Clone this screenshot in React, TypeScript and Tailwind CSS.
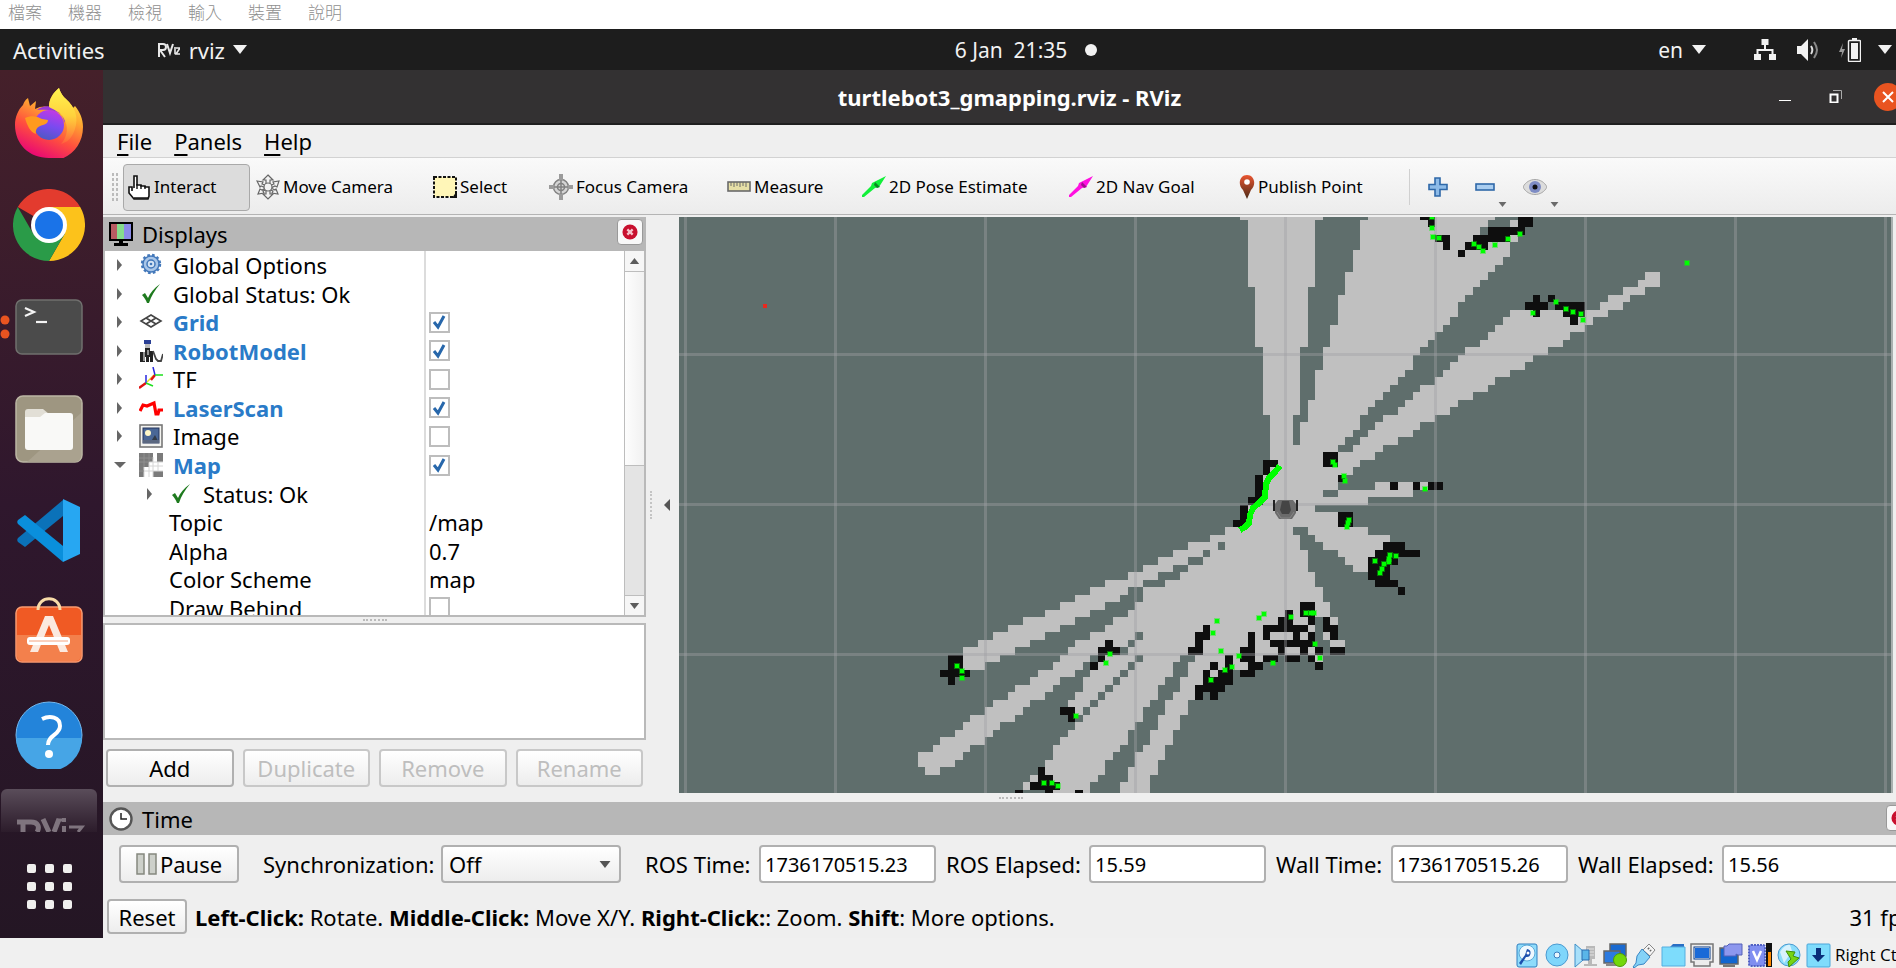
import React, { useState } from "react";

type Runs = number[];
type MapRow = [row: number, free: Runs, occupied: Runs];

/* Occupancy grid around the robot. Each run is a start/end column pair. */
const MAP_ROWS: MapRow[] = [
  [-39, [-6, 5, 11, 18, 20, 28], [18, 20, 31, 33]],
  [-38, [-5, 4, 10, 27, 30, 31], [19, 20, 31, 33]],
  [-37, [-5, 4, 10, 26], [27, 32]],
  [-36, [-5, 4, 10, 31], [20, 22, 25, 30]],
  [-35, [-5, 4, 10, 30], [21, 22, 24, 27]],
  [-34, [-5, 4, 9, 30], [23, 24]],
  [-33, [-5, 4, 9, 29], []],
  [-32, [-5, 4, 9, 28], []],
  [-31, [-5, 4, 8, 27, 48, 50], []],
  [-30, [-5, 4, 8, 26, 47, 50], []],
  [-29, [-4, 3, 8, 25, 45, 48], []],
  [-28, [-4, 3, 7, 24, 43, 46], [33, 34, 35, 36]],
  [-27, [-4, 3, 7, 23, 42, 45], [32, 35, 36, 40]],
  [-26, [-4, 3, 7, 23, 30, 37, 40, 43], [33, 34, 37, 40]],
  [-25, [-4, 3, 7, 22, 29, 41], [38, 39]],
  [-24, [-4, 3, 6, 21, 28, 40], []],
  [-23, [-4, 3, 6, 20, 27, 38], []],
  [-22, [-4, 3, 6, 19, 26, 37], []],
  [-21, [-3, 2, 5, 18, 24, 35], []],
  [-20, [-3, 2, 5, 17, 23, 33], []],
  [-19, [-3, 2, 5, 17, 22, 32], []],
  [-18, [-3, 2, 4, 16, 21, 30], []],
  [-17, [-3, 2, 4, 15, 20, 28], []],
  [-16, [-3, 2, 4, 14, 18, 27], []],
  [-15, [-3, 2, 4, 13, 17, 25], []],
  [-14, [-3, 2, 3, 12, 16, 23], []],
  [-13, [-3, 2, 3, 11, 15, 22], []],
  [-12, [-2, 1, 3, 10, 13, 20], []],
  [-11, [-2, 1, 2, 10, 12, 18], []],
  [-10, [-2, 1, 2, 9, 11, 17], []],
  [-9, [-2, 1, 2, 8, 10, 15], []],
  [-8, [-2, 7, 9, 13], []],
  [-7, [-2, 12], [5, 7]],
  [-6, [-2, 10], [-3, -1, 5, 7]],
  [-5, [-2, 9], [-3, -2]],
  [-4, [-3, 7], [-4, -3, 7, 8]],
  [-3, [-3, 7, 12, 19], [-4, -3, 14, 15, 17, 18, 19, 21]],
  [-2, [-3, 5, 7, 17], [-4, -3]],
  [-1, [-3, 11], [-5, -3]],
  [0, [-5, 4], [-6, -5]],
  [1, [-5, 7], [-6, -5, 7, 9]],
  [2, [-5, 7], [-7, -5, 7, 9]],
  [3, [-8, 1, 3, 11], []],
  [4, [-10, 2, 4, 14], []],
  [5, [-13, -9, -8, 2, 5, 13], [13, 16]],
  [6, [-15, -11, -10, 3, 7, 12], [12, 18]],
  [7, [-17, -13, -11, 3, 8, 11], [11, 15]],
  [8, [-19, -15, -13, 3, 9, 11], [11, 14]],
  [9, [-21, -17, -14, 4], [11, 14]],
  [10, [-24, -19, -16, 4], [12, 15]],
  [11, [-26, -21, -19, 5], [15, 16]],
  [12, [-28, -22, -19, 5], []],
  [13, [-30, -24, -20, 6], [2, 4]],
  [14, [-32, -26, -21, 6], [0, 1, 2, 4]],
  [15, [-35, -28, -23, 4, 6, 7], [-1, 1, 3, 4, 5, 6]],
  [16, [-37, -30, -24, 4], [-11, -10, -3, 3, 5, 7]],
  [17, [-39, -32, -26, -20, -19, 3, 5, 6], [-12, -10, -5, -4, -3, -2, 1, 2, 3, 4, 6, 7]],
  [18, [-41, -34, -28, -21, -20, -2, 6, 8], [-24, -23, -12, -11, -5, -4, -2, 4]],
  [19, [-43, -36, -29, -25, -21, 4], [-25, -22, -13, -11, -6, -4, -1, 0, 2, 3, 4, 5, 6, 8]],
  [20, [-43, -38, -30, -26, -24, -20, -19, -14, -12, -3, 4, 5], [-45, -43, -25, -24, -8, -7, -6, -4, -3, -1, 0, 2, 3, 4]],
  [21, [-43, -40, -31, -27, -25, -21, -20, -15, -13, -5], [-45, -43, -26, -25, -10, -9, -8, -7, -5, -3, 4, 5]],
  [22, [-33, -28, -26, -22, -21, -15, -13, -9], [-46, -42, -11, -10, -9, -7, -6, -4]],
  [23, [-34, -30, -27, -23, -22, -16, -14, -11], [-45, -44, -11, -7]],
  [24, [-36, -31, -27, -24, -23, -17, -14, -12], [-12, -8]],
  [25, [-37, -32, -28, -25, -24, -17, -15, -12], [-12, -11, -10, -9]],
  [26, [-39, -34, -29, -26, -25, -18, -16, -13], []],
  [27, [-40, -35, -28, -27, -26, -19, -16, -13], [-30, -28]],
  [28, [-42, -36, -27, -19, -17, -14], [-29, -28]],
  [29, [-43, -38, -28, -20, -17, -14], []],
  [30, [-44, -39, -29, -21, -18, -15], []],
  [31, [-46, -40, -30, -21, -18, -15], []],
  [32, [-47, -42, -31, -22, -19, -16], []],
  [33, [-49, -43, -31, -23, -20, -16], []],
  [34, [-49, -44, -32, -24, -20, -17], []],
  [35, [-48, -46, -32, -24, -21, -17], [-33, -32]],
  [36, [-34, -33, -31, -25, -21, -18], [-33, -31]],
  [37, [-35, -34, -30, -26, -22, -18], [-34, -30]],
  [38, [-31, -26, -22, -18], [-36, -35, -32, -31, -28, -27]],
];

const SCAN_POINTS: [number, number][] = [
  [1217, 621], [1213, 633], [1221, 651], [1259, 618], [1264, 614], [1291, 617], [1306, 613],
  [1311, 613], [1314, 613], [1315, 644], [1320, 658], [1273, 663], [1239, 656], [1232, 667],
  [1225, 670], [1211, 680], [1110, 654], [1106, 663], [1076, 716], [1044, 783], [1052, 783],
  [1058, 786], [957, 666], [962, 671], [962, 678], [1425, 489], [1375, 561], [1396, 556],
  [1390, 555], [1389, 559], [1389, 562], [1384, 564], [1382, 569], [1380, 573], [1349, 520],
  [1348, 523], [1347, 527], [1344, 476], [1345, 481], [1333, 462], [1335, 465], [1432, 217],
  [1432, 228], [1433, 237], [1439, 238], [1474, 244], [1479, 247], [1483, 251], [1495, 245],
  [1508, 239], [1520, 234], [1556, 302], [1566, 309], [1573, 312], [1581, 314], [1583, 320],
  [1533, 313], [1687, 263],
];

const runsToPath = (rows: [number, Runs][]) =>
  rows
    .flatMap(([row, runs]) => {
      const parts: string[] = [];
      for (let k = 0; k < runs.length; k += 2) {
        parts.push(`M${runs[k]} ${row}H${runs[k + 1]}V${row + 1}H${runs[k]}Z`);
      }
      return parts;
    })
    .join("");

const FREE_PATH = runsToPath(MAP_ROWS.map(([row, free]) => [row, free]));
const OCCUPIED_PATH = runsToPath(MAP_ROWS.map(([row, , occupied]) => [row, occupied]));

function MapView() {
  return (
    <svg
      className="h-[576px] min-w-0 flex-1 bg-[#5f6e6c]"
      viewBox="679 217 1212 576"
      preserveAspectRatio="xMidYMid slice"
      shapeRendering="crispEdges"
      role="img"
      aria-label="Map view"
    >
      <g transform="translate(1285.3 504.8) scale(7.5)">
        <path d={FREE_PATH} fill="#c0c0c0" />
        <path d={OCCUPIED_PATH} fill="#0e0e0e" />
      </g>
      <g fill="#a0a0a4" fillOpacity="0.4">
        {[684, 834, 984, 1134, 1284, 1434, 1584, 1734, 1884].map((x) => (
          <rect key={x} x={x} y="217" width="3" height="577" />
        ))}
        {[353, 503, 653].map((y) => (
          <rect key={y} x="679" y={y} width="1212" height="3" />
        ))}
      </g>
      <g fill="#00ff00">
        {SCAN_POINTS.map(([x, y]) => (
          <g key={`${x}-${y}`}>
            <rect x={x - 3} y={y - 3} width="6" height="6" fillOpacity="0.4" />
            <rect x={x - 2} y={y - 2} width="4" height="4" />
          </g>
        ))}
      </g>
      <path
        d="M1280 466l-5 6-6 6-3 6-1 13-7 7-5 4-3 7-1 8-4 4-5 3"
        fill="none"
        stroke="#00ff00"
        strokeWidth="6"
        strokeLinejoin="round"
      />
      <rect x="763" y="304" width="4" height="4" fill="#e8281e" />
      <g shapeRendering="auto">
        <path d="M1273 500h2v11h-2zM1296 500h2v11h-2z" fill="#222" />
        <path d="M1278 500h15l3 4v9l-4 6h-13l-4-6v-9z" fill="#6b6b6b" />
        <path d="M1282 501h7l2 9-2 4h-7l-2-4z" fill="#454545" />
        <path d="M1277 512l4 6h9l4-6" fill="none" stroke="#868686" />
      </g>
    </svg>
  );
}

/* ---------- small glyphs ---------- */

const Caret = ({ className = "" }: { className?: string }) => (
  <svg className={className} width="14" height="9" viewBox="0 0 14 9" aria-hidden="true">
    <path d="M0 0h14L7 9z" fill="currentColor" />
  </svg>
);

const CloseDot = () => (
  <svg width="16" height="16" viewBox="0 0 18 18" aria-hidden="true">
    <circle cx="9" cy="9" r="8.500" fill="#c8102e" />
    <path d="M6 6l6 6M12 6l-6 6" stroke="#f6c3cb" strokeWidth="2.600" />
  </svg>
);

const CheckGlyph = () => (
  <svg width="20" height="20" viewBox="0 0 20 20" aria-hidden="true">
    <path d="M1 11l3-2 3 5C9 9 13 4 19 0 14 6 10 12 8 19H6C5 16 3 13 1 11z" fill="#1e7a1e" />
  </svg>
);

/* ---------- launcher icons ---------- */

const Firefox = () => (
  <svg width="68" height="70" viewBox="0 0 68 70" aria-hidden="true">
    <defs>
      <linearGradient id="ffBody" x1="0.8" y1="0" x2="0.35" y2="1">
        <stop offset="0" stopColor="#fff44f" />
        <stop offset="0.35" stopColor="#ffa930" />
        <stop offset="0.65" stopColor="#ff4f3e" />
        <stop offset="1" stopColor="#e6007a" />
      </linearGradient>
      <linearGradient id="ffGlobe" x1="0.6" y1="0" x2="0.3" y2="1">
        <stop offset="0" stopColor="#c139e6" />
        <stop offset="0.5" stopColor="#7a4af0" />
        <stop offset="1" stopColor="#4b5ac0" />
      </linearGradient>
      <linearGradient id="ffFlame" x1="0.5" y1="0" x2="0.5" y2="1">
        <stop offset="0" stopColor="#fff44f" />
        <stop offset="0.5" stopColor="#ffd13c" />
        <stop offset="1" stopColor="#ff8a3c" stopOpacity="0.3" />
      </linearGradient>
    </defs>
    <path d="M34 70C14 70 0 56 0 37c0-8 3-15 8-20 1-3 2-5 5-7l2 8 6-5-1 8c5-3 10-3 14-2 0-8 4-14 10-19 2 7 6 10 10 14l4 6 2-2c5 6 8 13 8 21 0 20-15 34-34 34z" fill="url(#ffBody)" />
    <circle cx="34" cy="37" r="15" fill="url(#ffGlobe)" />
    <path d="M22 22c6-5 16-5 22 1 3 3 5 7 5 12 2-3 0-7-3-9-6-4-14-5-24-4z" fill="#9a38d8" />
    <path d="M34 19c0-8 4-14 10-19 2 7 6 10 10 14 8 8 10 20 4 32-3 6-8 9-12 10 7-8 8-18 2-27-2-4-8-7-14-10z" fill="url(#ffFlame)" />
    <path d="M10 30c6-3 12-2 17 1l6 1c0 3-2 4-5 5-5 1-8 4-7 9-6-2-9-9-11-16z" fill="#ff9a1f" />
  </svg>
);

const Chrome = () => (
  <svg width="72" height="72" viewBox="0 0 72 72" aria-hidden="true">
    <path d="M36 36L4.800 18A36 36 0 0 1 67.200 18z" fill="#e33b2e" />
    <path d="M36 18H67.200A36 36 0 0 1 36 72l15.600-27z" fill="#fcc21b" />
    <path d="M20.400 45L4.800 18A36 36 0 0 0 36 72l15.600-27z" fill="#2a9b48" />
    <circle cx="36" cy="36" r="18" fill="#fff" />
    <circle cx="36" cy="36" r="14" fill="#1a73e8" />
  </svg>
);

const TerminalIcon = () => (
  <svg width="68" height="56" viewBox="0 0 68 56" aria-hidden="true">
    <rect x="1" y="1" width="66" height="54" rx="6" fill="#4b4b4b" stroke="#70706e" strokeWidth="1.500" />
    <path d="M10 9l9 4-9 4" fill="none" stroke="#f4f4f4" strokeWidth="2.200" />
    <path d="M21 23h11" stroke="#f4f4f4" strokeWidth="2.200" />
  </svg>
);

const Files = () => (
  <svg width="68" height="68" viewBox="0 0 68 68" aria-hidden="true">
    <rect x="1" y="1" width="66" height="66" rx="7" fill="#9e9681" stroke="#bcb6a4" strokeWidth="1.500" />
    <path d="M66 18v43a6 6 0 0 1-6 6H12z" fill="#aaa28f" />
    <path d="M10 17a3 3 0 0 1 3-3h15l6 5v8H10z" fill="#e2dfd6" />
    <path d="M10 22h15l5-4h25a3 3 0 0 1 3 3v31a3 3 0 0 1-3 3H13a3 3 0 0 1-3-3z" fill="#f9f9f7" />
  </svg>
);

const VsCode = () => (
  <svg width="64" height="64" viewBox="0 0 64 64" aria-hidden="true">
    <path d="M46 1v16L8 48 1 43c-1-1-1-3 0-4z" fill="#0b72b9" />
    <path d="M46 63V47L8 16l-7 5c-1 1-1 3 0 4z" fill="#0a8fdc" />
    <path d="M46 0l17 8v47l-17 8z" fill="#27a7f2" />
  </svg>
);

const Software = () => (
  <svg width="68" height="72" viewBox="0 0 68 72" aria-hidden="true">
    <rect x="1" y="10" width="66" height="55" rx="6" fill="#f05a24" stroke="#f79a70" strokeWidth="1.500" />
    <path d="M2 38h64v21a5 5 0 0 1-5 5H7a5 5 0 0 1-5-5z" fill="#f3804c" />
    <path d="M23 13C23-2 45-2 45 13" fill="none" stroke="#f8dca8" strokeWidth="3" />
    <path d="M30 19h8l15 36h-8L34 28 23 55h-8z" fill="#fbe9df" />
    <rect x="12" y="40" width="43" height="8" rx="3" fill="#fff" />
    <path d="M14 44h39" stroke="#f3a27e" />
  </svg>
);

const Help = () => (
  <svg width="68" height="68" viewBox="0 0 68 68" aria-hidden="true">
    <circle cx="34" cy="34" r="33" fill="#2384da" stroke="#73b8ee" />
    <path d="M1 37h66a33 33 0 0 1-66 0z" fill="#46a5e6" />
    <path d="M27 18c8-4 18-2 18 7 0 9-12 9-12 19" fill="none" stroke="#fff" strokeWidth="4" />
    <circle cx="34" cy="53" r="4" fill="#fff" />
  </svg>
);

const LAUNCHERS: { name: string; icon: React.ReactNode; running?: boolean }[] = [
  { name: "Firefox", icon: <Firefox /> },
  { name: "Chrome", icon: <Chrome /> },
  { name: "Terminal", icon: <TerminalIcon />, running: true },
  { name: "Files", icon: <Files /> },
  { name: "Visual Studio Code", icon: <VsCode /> },
  { name: "Software", icon: <Software /> },
  { name: "Help", icon: <Help /> },
];

function Dock() {
  return (
    <nav className="flex w-[103px] shrink-0 flex-col overflow-hidden bg-linear-to-b from-[#45202a] via-[#2f172d] via-50% to-[#241624] pt-[2px]" aria-label="Dock">
      {LAUNCHERS.map(({ name, icon, running }) => (
        <button key={name} aria-label={name} className="relative flex h-[102px] w-[98px] shrink-0 items-center justify-center">
          {running && (
            <svg className="absolute left-0" width="10" height="24" viewBox="0 0 10 24" aria-hidden="true">
              <circle cx="5" cy="5" r="4.500" fill="#e95420" />
              <circle cx="5" cy="19" r="4.500" fill="#e95420" />
            </svg>
          )}
          {icon}
        </button>
      ))}
      <button aria-label="RViz" className="mt-[3px] ml-px h-[43px] w-24 shrink-0 overflow-hidden rounded-t-md bg-linear-to-b from-[#5a4d5a] to-[#2c1c2b]">
        <svg width="96" height="43" viewBox="0 0 96 43" aria-hidden="true">
          <g fill="none" stroke="#7f747e" strokeWidth="5">
            <path d="M16 33h14c7 0 9 5 6 10M22 33v10" />
            <path d="M42 30l6 13M58 30l-5 13" />
            <path d="M56 31h9" strokeWidth="3" />
            <path d="M63 37v6M63 29v4" strokeWidth="4" />
            <path d="M68 38h13l-4 5" strokeWidth="3" />
          </g>
        </svg>
      </button>
      <button aria-label="Show applications" className="mt-8 ml-[27px] grid w-[45px] shrink-0 grid-cols-3 gap-[9px]">
        {Array.from({ length: 9 }, (_, k) => (
          <span key={k} className="size-[9px] rounded-xs bg-[#f0efee]" />
        ))}
      </button>
    </nav>
  );
}

/* ---------- toolbar ---------- */

const HandIcon = () => (
  <svg width="24" height="26" viewBox="0 0 24 26" aria-hidden="true">
    <path d="M7 14V2h3v9h4v1h4v1h4v9l-1 3H7l-5-6v-6h3v4" fill="#fff" stroke="#111" strokeWidth="1.600" />
    <path d="M10 10v5M14 11v4M18 12v3M7 24h14" stroke="#111" strokeWidth="1.400" />
  </svg>
);
const MoveIcon = () => (
  <svg width="24" height="26" viewBox="0 0 24 26" aria-hidden="true">
    <g fill="#f2f2f2" stroke="#666" strokeWidth="1.200">
      <path d="M12 1l5 5h-3v14h3l-5 5-5-5h3V6H7z" />
      <path d="M1 7l6 1-1 2 6 2 6-2-1-2 6-1-2 6-2-1-4 2 4 2 1-1 2 5-6-1 1-2-5-2-5 2 1 2-6 1 2-5 2 1 4-2-5-2-1 1z" />
      <circle cx="12" cy="13" r="4" />
    </g>
  </svg>
);
const SelectIcon = () => (
  <svg width="24" height="22" viewBox="0 0 24 22" aria-hidden="true">
    <rect x="1" y="1" width="22" height="20" fill="#fff6b8" stroke="#111" strokeWidth="2" strokeDasharray="3 1.500" />
    <path d="M24 15v7h-5z" fill="#111" />
  </svg>
);
const FocusIcon = () => (
  <svg width="24" height="26" viewBox="0 0 24 26" aria-hidden="true">
    <g fill="none" stroke="#808080" strokeWidth="1.500">
      <circle cx="12" cy="13" r="7.500" fill="#d4d4d4" />
      <circle cx="12" cy="13" r="3.500" />
      <path d="M12 5v16M4 13h16" />
    </g>
    <path d="M10 6V0h4v6zM10 20v6h4v-6zM5 11H0v4h5zM19 11h5v4h-5z" fill="#9b9b9b" />
  </svg>
);
const RulerIcon = () => (
  <svg width="24" height="26" viewBox="0 0 24 26" aria-hidden="true">
    <rect x="1" y="8" width="22" height="9" fill="#e6dfa6" stroke="#6a6a6a" strokeWidth="1.600" />
    <path d="M4 8v4M7 8v5M10 8v4M13 8v5M16 8v4M19 8v5" stroke="#6a6a6a" />
  </svg>
);
const ArrowTool = ({ light, dark }: { light: string; dark: string }) => (
  <svg width="24" height="26" viewBox="0 0 24 26" aria-hidden="true">
    <path d="M24 2l-7 11-4 1L2 23l-2 0 0-2 9-9 1-3z" fill={light} />
    <path d="M13 8l5 5-3 1-3-3z" fill={dark} />
  </svg>
);
const PinIcon = () => (
  <svg width="16" height="26" viewBox="0 0 16 26" aria-hidden="true">
    <defs>
      <linearGradient id="pin" x1="0" y1="0" x2="0" y2="1">
        <stop offset="0" stopColor="#ea5530" />
        <stop offset="1" stopColor="#4b2b18" />
      </linearGradient>
    </defs>
    <path d="M8 25l-4-9C-2 10 1 1 8 1s10 9 4 15z" fill="url(#pin)" />
    <circle cx="8" cy="8" r="2.800" fill="#fff" />
  </svg>
);

const TOOLS: { label: string; icon: React.ReactNode; width: string }[] = [
  { label: "Interact", icon: <HandIcon />, width: "w-[127px] border-[#a9a9a9] bg-[#dcdcdc]" },
  { label: "Move Camera", icon: <MoveIcon />, width: "w-[170px] ml-[2px] border-transparent" },
  { label: "Select", icon: <SelectIcon />, width: "w-[108px] ml-[7px] border-transparent" },
  { label: "Focus Camera", icon: <FocusIcon />, width: "w-[170px] ml-[8px] border-transparent" },
  { label: "Measure", icon: <RulerIcon />, width: "w-[127px] ml-[8px] border-transparent" },
  { label: "2D Pose Estimate", icon: <ArrowTool light="#12f03a" dark="#0a8a22" />, width: "w-[200px] ml-[8px] border-transparent" },
  { label: "2D Nav Goal", icon: <ArrowTool light="#ff10e0" dark="#a10a90" />, width: "w-[160px] ml-[7px] border-transparent" },
  { label: "Publish Point", icon: <PinIcon />, width: "w-[164px] ml-[10px] border-transparent" },
];

function Toolbar() {
  const [active, setActive] = useState("Interact");
  return (
    <div className="flex h-[58px] shrink-0 items-center border-t border-b border-t-[#d2d2d2] border-b-[#b4b4b4] bg-linear-to-b from-[#fafafa] to-[#ececec] pt-[2px] pl-2" role="toolbar" aria-label="Tools">
      <span className="mr-1 h-[30px] w-2 bg-[radial-gradient(#bbb_1px,transparent_1px)] bg-[size:4px_5px]" />
      {TOOLS.map(({ label, icon, width }) => (
        <button
          key={label}
          aria-pressed={active === label}
          onClick={() => setActive(label)}
          className={`flex h-[47px] shrink-0 items-center gap-[3px] rounded-sm border pl-[3px] text-[17px] whitespace-nowrap ${width}`}
        >
          {icon}
          {label}
        </button>
      ))}
      <span className="mr-[15px] ml-[10px] h-9 w-px bg-[#d0d0d0]" />
      <button aria-label="Add tool" className="flex h-12 w-9 items-center">
        <svg width="20" height="20" viewBox="0 0 20 20" className="ml-[3px]" aria-hidden="true">
          <path d="M7 1h5v6.500h7v5h-7V19H7v-6.500H1v-5h6z" fill="#8dbbe8" stroke="#2f68a8" strokeWidth="1.600" />
        </svg>
      </button>
      <button aria-label="Remove tool" className="relative ml-[14px] flex h-12 w-9 items-center">
        <svg width="20" height="8" viewBox="0 0 20 8" aria-hidden="true">
          <rect x="1" y="1" width="18" height="6" fill="#a9cdf0" stroke="#2f68a8" strokeWidth="1.600" />
        </svg>
        <Caret className="absolute right-1 bottom-1 h-[5px] w-[9px] text-[#6a6a6a]" />
      </button>
      <button aria-label="View options" className="relative ml-3 flex h-12 w-9 items-center">
        <svg width="24" height="16" viewBox="0 0 24 16" aria-hidden="true">
          <path d="M0 8C5-2 19-2 24 8 19 18 5 18 0 8z" fill="#dcdcdc" stroke="#a8a8a8" />
          <circle cx="12" cy="8" r="6" fill="#7e8cc4" />
          <circle cx="12" cy="8" r="2.500" fill="#111" />
        </svg>
        <Caret className="absolute right-0 bottom-1 h-[5px] w-[9px] text-[#6a6a6a]" />
      </button>
    </div>
  );
}

/* ---------- displays tree ---------- */

const TREE_ICON = "h-6 w-6";
const GearIcon = () => (
  <svg className={TREE_ICON} viewBox="0 0 24 24" aria-hidden="true">
    <circle cx="12" cy="11" r="8" fill="#a9c6e8" stroke="#4378ba" strokeWidth="1.500" />
    <circle cx="12" cy="11" r="9" fill="none" stroke="#4378ba" strokeWidth="2.400" strokeDasharray="2.600 2.200" />
    <circle cx="12" cy="11" r="4" fill="#d5e4f5" stroke="#4378ba" strokeWidth="1.500" />
    <circle cx="12" cy="11" r="1.300" fill="#4378ba" />
  </svg>
);
const GridIcon = () => (
  <svg className={TREE_ICON} viewBox="0 0 24 24" aria-hidden="true">
    <path d="M12 5l10 6-10 6L2 11zM7 8l10 6M17 8L7 14" fill="none" stroke="#444" strokeWidth="1.600" />
  </svg>
);
const RobotIcon = () => (
  <svg className={TREE_ICON} viewBox="0 0 24 24" aria-hidden="true">
    <path d="M5 1h7v4H5z" fill="#2a3f94" />
    <path d="M6 5h5v4H6z" fill="#bbb" />
    <path d="M6 9h5v3h3v11h-3v-5h-1v5H7v-5H6v5H1V13h5z" fill="#222" />
    <path d="M5 13v9M9 11v5" stroke="#ddd" strokeWidth="1.200" />
    <path d="M14 12l3 8 2 2h3l2-7" fill="none" stroke="#444" strokeWidth="1.800" />
  </svg>
);
const TfIcon = () => (
  <svg className={TREE_ICON} viewBox="0 0 24 24" aria-hidden="true">
    <g fill="none" strokeWidth="1.500">
      <path d="M8 15l7-7" stroke="#eadb22" />
      <path d="M0 21l7-5M12 13l4-5" stroke="#e01212" strokeWidth="2.400" />
      <path d="M7 16V8M16 8l-2-8" stroke="#2a2ae0" />
      <path d="M7 16l7 3M16 8h8" stroke="#1ee01e" />
    </g>
  </svg>
);
const LaserIcon = () => (
  <svg className={TREE_ICON} viewBox="0 0 24 24" aria-hidden="true">
    <path d="M1 15l3-6 4 1 7-3 2 11 2 0 1-4 4 0" fill="none" stroke="#f00" strokeWidth="3.200" />
  </svg>
);
const ImageIcon = () => (
  <svg className={TREE_ICON} viewBox="0 0 24 24" aria-hidden="true">
    <rect x="1" y="1" width="22" height="22" fill="#f4f4f0" stroke="#777" strokeWidth="1.600" />
    <rect x="4" y="4" width="16" height="15" fill="#4a6796" stroke="#25355c" />
    <circle cx="9" cy="9" r="3" fill="#fff8c8" />
    <path d="M11 19l5-8 4 8z" fill="#333b47" />
    <path d="M4 16h16v3H4z" fill="#5a6780" />
  </svg>
);
const MapIcon = () => (
  <svg className={TREE_ICON} viewBox="0 0 24 24" aria-hidden="true">
    <path d="M0 0h14v9H10v5H4v10H0zM0 9h10v5H5v10H0zM18 0h6v9h-6zM14 18h10v6H14z" fill="#7b7b7b" />
    <path d="M5 14v10M10 9v15M14 4v20M19 9v9M5 18h19M10 13h14M10 9h14" fill="none" stroke="#d6d6d6" />
    <path d="M0 5h14M5 0v14M10 0v9M0 9h10M0 18h5" stroke="#8f8f8f" />
  </svg>
);

type TreeItem = {
  label: string;
  icon?: React.ReactNode;
  enabled?: boolean;
  value?: string;
  level?: "root" | "child" | "leaf";
  open?: boolean;
};

const TREE: TreeItem[] = [
  { label: "Global Options", icon: <GearIcon /> },
  { label: "Global Status: Ok", icon: <CheckGlyph /> },
  { label: "Grid", icon: <GridIcon />, enabled: true },
  { label: "RobotModel", icon: <RobotIcon />, enabled: true },
  { label: "TF", icon: <TfIcon />, enabled: false },
  { label: "LaserScan", icon: <LaserIcon />, enabled: true },
  { label: "Image", icon: <ImageIcon />, enabled: false },
  { label: "Map", icon: <MapIcon />, enabled: true, open: true },
  { label: "Status: Ok", icon: <CheckGlyph />, level: "child" },
  { label: "Topic", value: "/map", level: "leaf" },
  { label: "Alpha", value: "0.7", level: "leaf" },
  { label: "Color Scheme", value: "map", level: "leaf" },
  { label: "Draw Behind", enabled: false, level: "leaf" },
];

function Checkbox({ label, initial }: { label: string; initial: boolean }) {
  const [on, setOn] = useState(initial);
  return (
    <label className="grid size-[21px] place-items-center border-2 border-[#bdbdbd] bg-white">
      <input type="checkbox" aria-label={label} checked={on} onChange={() => setOn(!on)} className="col-start-1 row-start-1 size-full appearance-none" />
      {on && (
        <svg className="pointer-events-none col-start-1 row-start-1" width="15" height="16" viewBox="0 0 15 16" aria-hidden="true">
          <path d="M2 8l4 5 6-11" fill="none" stroke="#2767ab" strokeWidth="3" />
        </svg>
      )}
    </label>
  );
}

function TreeRow({ item }: { item: TreeItem }) {
  const { label, icon, enabled, value, level = "root", open } = item;
  const indent = level === "root" ? "pl-[9px]" : level === "child" ? "pl-[39px]" : "pl-[64px]";
  const tone = enabled ? "font-bold text-[#2a7bc8]" : "";
  return (
    <div role="treeitem" aria-selected={false} className="grid grid-cols-[321px_1fr] items-center">
      <div className={`flex h-full items-center border-r-2 border-[#dcdcdc] ${indent}`}>
        {level !== "leaf" && (
          <>
            <svg width="12" height="12" viewBox="0 0 12 12" aria-hidden="true">
              <path d={open ? "M0 3h12L6 9z" : "M3 0v12l5-6z"} fill="#666" />
            </svg>
            <span className="mr-[10px] ml-[13px] flex w-6 justify-center">{icon}</span>
          </>
        )}
        <span className={`whitespace-nowrap ${tone}`}>{label}</span>
      </div>
      <div className="pl-[3px]">
        {enabled !== undefined && <Checkbox label={label} initial={enabled} />}
        {value}
      </div>
    </div>
  );
}

const buttonFace =
  "rounded-sm border-2 border-[#b0b0b0] bg-linear-to-b from-white to-[#ededed] text-center disabled:border-[#c8c8c8] disabled:text-[#bebebe]";

function DisplaysPanel() {
  return (
    <section className="flex w-[543px] shrink-0 flex-col" aria-label="Displays">
      <header className="flex h-[34px] items-center bg-[#b7b7b7] pr-[3px] pl-[6px]">
        <svg width="24" height="24" viewBox="0 0 24 24" aria-hidden="true">
          <rect x="1" y="1" width="22" height="17" fill="#8a8ae8" stroke="#000" strokeWidth="2" />
          <path d="M2 2h6v15H2z" fill="#b85c62" />
          <path d="M8 2h7v15H8z" fill="#85dc8c" />
          <path d="M10 19h4v2h5v3H5v-3h5z" fill="#000" />
        </svg>
        <h2 className="ml-[9px] flex-1">Displays</h2>
        <button aria-label="Close Displays" className="mb-1 grid size-[26px] place-items-center rounded-sm border border-[#999] bg-[#f8f8f8]">
          <CloseDot />
        </button>
      </header>
      <div className="flex h-[366px] overflow-hidden border-2 border-t-0 border-[#b9b9b9] bg-white">
        <div role="tree" aria-label="Displays" className="grid h-[371px] min-w-0 flex-1 grid-rows-[repeat(13,minmax(0,1fr))]">
          {TREE.map((item) => (
            <TreeRow key={item.label} item={item} />
          ))}
        </div>
        <div className="flex w-5 flex-col border-l border-[#bdbdbd] bg-[#e4e4e4]">
          <button aria-label="Scroll up" className="grid h-5 place-items-center bg-[#f6f6f6] text-[#5c5c5c]">
            <Caret className="h-[6px] w-[11px] rotate-180" />
          </button>
          <span className="h-[195px] border-y border-[#bdbdbd] bg-linear-to-r from-[#fdfdfd] to-[#f1f1f1]" />
          <span className="flex-1" />
          <button aria-label="Scroll down" className="grid h-5 place-items-center border-t border-[#bdbdbd] bg-[#f6f6f6] text-[#5c5c5c]">
            <Caret className="h-[6px] w-[11px]" />
          </button>
        </div>
      </div>
      <div className="grid h-[6px] place-items-center">
        <span className="w-6 border-t-2 border-dotted border-[#bbb]" />
      </div>
      <div className="h-[117px] border-2 border-[#b9b9b9] bg-white" />
      <div className="mt-[9px] grid grid-cols-4 gap-[9px] px-[3px]">
        <button className={`h-[38px] ${buttonFace}`}>Add</button>
        <button disabled className={`h-[38px] ${buttonFace}`}>Duplicate</button>
        <button disabled className={`h-[38px] ${buttonFace}`}>Remove</button>
        <button disabled className={`h-[38px] ${buttonFace}`}>Rename</button>
      </div>
    </section>
  );
}

/* ---------- time panel ---------- */

const CLOCKS = [
  { id: "ros-time", label: "ROS Time:", value: "1736170515.23", labelWidth: "w-[104px]", gap: "ml-6" },
  { id: "ros-elapsed", label: "ROS Elapsed:", value: "15.59", labelWidth: "w-[133px]", gap: "ml-[10px]" },
  { id: "wall-time", label: "Wall Time:", value: "1736170515.26", labelWidth: "w-[105px]", gap: "ml-[10px]" },
  { id: "wall-elapsed", label: "Wall Elapsed:", value: "15.56", labelWidth: "w-[134px]", gap: "ml-[10px]" },
];

function TimePanel() {
  return (
    <section aria-label="Time">
      <header className="flex h-[33px] items-center bg-[#b7b7b7] pl-[6px]">
        <svg width="24" height="24" viewBox="0 0 24 24" aria-hidden="true">
          <circle cx="12" cy="12" r="10.500" fill="#fff" stroke="#555" strokeWidth="2.400" />
          <path d="M12 6v6h6" fill="none" stroke="#222" strokeWidth="1.500" />
        </svg>
        <h2 className="ml-[9px] flex-1">Time</h2>
        <button aria-label="Close Time" className="-mr-4 mb-[2px] grid size-[26px] shrink-0 place-items-center rounded-sm border border-[#999] bg-[#f8f8f8]">
          <CloseDot />
        </button>
      </header>
      <div className="flex items-center pt-[10px] pl-4">
        <button className={`flex h-[38px] w-[120px] shrink-0 items-center justify-center ${buttonFace}`}>
          <svg width="22" height="22" viewBox="0 0 22 22" className="mr-[2px]" aria-hidden="true">
            <path d="M1 1h7v20H1zM13 1h7v20h-7z" fill="#cdd0ca" stroke="#85887f" strokeWidth="1.500" />
          </svg>
          Pause
        </button>
        <label htmlFor="sync" className="ml-6 w-[168px] shrink-0 whitespace-nowrap">Synchronization:</label>
        <div className="relative ml-[10px] shrink-0">
          <select id="sync" defaultValue="Off" className={`h-[38px] w-[180px] appearance-none pl-[6px] ${buttonFace} text-left`}>
            <option>Off</option>
            <option>Exact</option>
            <option>Approximate</option>
          </select>
          <Caret className="pointer-events-none absolute top-4 right-[10px] h-[7px] w-3 text-[#555]" />
        </div>
        {CLOCKS.map(({ id, label, value, labelWidth, gap }) => (
          <React.Fragment key={id}>
            <label htmlFor={id} className={`shrink-0 whitespace-nowrap ${labelWidth} ${gap}`}>{label}</label>
            <input id={id} readOnly value={value} className="ml-[10px] h-[38px] w-[177px] shrink-0 rounded-sm border-2 border-[#b0b0b0] bg-white pl-1 text-[20px]" />
          </React.Fragment>
        ))}
      </div>
      <div className="mt-4 flex items-center pb-1 pl-1">
        <button className={`h-[35px] w-20 shrink-0 ${buttonFace}`}>Reset</button>
        <p className="ml-2 flex-1 whitespace-nowrap">
          <b>Left-Click:</b> Rotate. <b>Middle-Click:</b> Move X/Y. <b>Right-Click:</b>: Zoom. <b>Shift</b>: More options.
        </p>
        <span className="-mr-4 shrink-0 whitespace-nowrap">31 fps</span>
      </div>
    </section>
  );
}

/* ---------- virtual machine status icons ---------- */

const VM_ICONS: { name: string; art: React.ReactNode }[] = [
  { name: "Hard disk", art: <><rect x="1" y="1" width="20" height="23" rx="2" fill="#8fdcfb" stroke="#2f7fc0" /><circle cx="11" cy="10" r="8" fill="#eef8fe" stroke="#5aa9d8" /><path d="M11 6a4 4 0 1 1-1 8l-5 8-2-2 6-8z" fill="#1c4fae" /><circle cx="12" cy="10" r="1.500" fill="#fff" /></> },
  { name: "Optical disc", art: <><circle cx="12" cy="12" r="11" fill="#7fd6fb" stroke="#4a9ad0" /><circle cx="12" cy="12" r="3" fill="#eaf7fe" stroke="#3a7fc0" /></> },
  { name: "Audio", art: <><path d="M12 3h9v13h-3v5h5v2H10v-2h4v-4h-2z" fill="#b9b9b9" /><path d="M13 6h7M13 9h7M13 12h7" stroke="#e2e2e2" /><path d="M1 1l8 7v9l-8 7z" fill="#a8e0fa" stroke="#3f8fc8" /><path d="M8 7h7v10H8z" fill="#5ab6e8" stroke="#2b6cb0" /></> },
  { name: "Network", art: <><rect x="7" y="1" width="16" height="12" fill="#1a6ad0" stroke="#666" strokeWidth="1.500" /><rect x="1" y="8" width="16" height="12" fill="#2b7ae0" stroke="#666" strokeWidth="1.500" /><path d="M3 23h12v-3H3z" fill="#888" /><circle cx="17" cy="17" r="6.500" fill="#72d80a" stroke="#4d9a08" /></> },
  { name: "USB", art: <><path d="M17 1l6 6-5 6-7-6z" fill="#f4f4f4" stroke="#888" /><path d="M16 5l3 3" stroke="#666" strokeWidth="2" strokeDasharray="1.500 1.500" /><path d="M10 6l8 8-6 7-6 1-4 3-1-1 3-4 1-7z" fill="#85d2f7" stroke="#3a86c4" /></> },
  { name: "Shared folders", art: <><path d="M9 4l3-3h11v8H9z" fill="#2a6fc4" /><path d="M1 4h23v19H1z" fill="#7ddcfc" stroke="#55aee0" /></> },
  { name: "Display", art: <><path d="M1 1h22v18h-3v4H4v-4H1z" fill="#ececec" stroke="#777" strokeWidth="1.500" /><rect x="4.500" y="4.500" width="15" height="11" fill="#1a6ad8" stroke="#fff" /><rect x="4" y="4" width="16" height="12" fill="none" stroke="#0b3c88" /></> },
  { name: "Recording", art: <><rect x="1" y="5" width="18" height="16" fill="#1266d0" stroke="#666" strokeWidth="1.500" /><path d="M4 24h12v-2H4z" fill="#777" /><path d="M5 3h3l2-2h13v11h-4l-2-1v2H5z" fill="#8d97ee" stroke="#5560b8" /></> },
  { name: "Processor", art: <><rect x="1" y="2" width="16" height="21" rx="2" fill="#7f8ef0" stroke="#5161c4" strokeWidth="2" strokeDasharray="2 1" /><path d="M5 8l4 9 4-9" fill="none" stroke="#fff" strokeWidth="2.500" /><path d="M18 0h6v24h-6z" fill="#111" /><path d="M20 9h3v14h-3z" fill="#ff8a00" /></> },
  { name: "Mouse integration", art: <><circle cx="12" cy="12" r="11" fill="#8adcfb" stroke="#4a9ad0" /><path d="M3 9c3-5 7-8 10-7l2 6-8 12z" fill="#d8f2fd" /><path d="M9 8l9 1-2 4 6 2-10 9-1-5 3-3z" fill="#76d414" stroke="#3f8f08" /></> },
  { name: "Keyboard capture", art: <><rect x="1" y="1" width="23" height="23" rx="1" fill="#7fdcfc" stroke="#4aa6da" /><path d="M10 5h5v7h4l-7 7-6-7h4z" fill="#0b2f7a" /></> },
];

const HOST_MENU = ["檔案", "機器", "檢視", "輸入", "裝置", "說明"];

export default function App() {
  return (
    <div className="flex min-h-screen flex-col overflow-hidden bg-[#f0f0f0] font-['Noto_Sans','Open_Sans',sans-serif] text-[22px] leading-7 text-black">
      <nav className="flex h-[29px] items-start gap-[26px] bg-white pl-2 font-['Noto_Sans_CJK_TC',sans-serif] text-[17px] leading-6 font-light text-[#8f8f8f]">
        {HOST_MENU.map((name) => (
          <button key={name}>{name}</button>
        ))}
      </nav>

      <header className="grid h-[41px] grid-cols-[1fr_auto_1fr] items-center bg-[#1d1d1d] text-[#f2f2f2]">
        <div className="flex items-center pl-[13px]">
          <button>Activities</button>
          <button className="ml-[53px] flex items-center">
            <svg width="22" height="16" viewBox="0 0 22 16" aria-hidden="true">
              <g fill="none" stroke="#e8e8e8" strokeWidth="2">
                <path d="M1 15V2h4c4 0 4 6 0 6H2l5 7" />
                <path d="M9 2l3 9 3-9" />
                <path d="M17 5v7M18 6h4l-4 6h4" strokeWidth="1.600" />
              </g>
            </svg>
            <span className="ml-[9px]">rviz</span>
            <Caret className="ml-2" />
          </button>
        </div>
        <button className="ml-[156px] flex items-center text-[21px] whitespace-pre">
          6 Jan  21:35
          <span className="ml-[18px] size-3 rounded-full bg-[#f2f2f2]" />
        </button>
        <div className="flex items-center justify-end pr-1">
          <button className="flex items-center text-[21px]">
            en
            <Caret className="ml-[9px]" />
          </button>
          <button aria-label="System menu" className="ml-12 flex items-center">
            <svg width="22" height="22" viewBox="0 0 22 22" aria-hidden="true">
              <path d="M7.500 0h7v6h-7zM0 15h7v6H0zM15 15h7v6h-7z" fill="#f2f2f2" />
              <path d="M11 5v6M3.500 16v-5h15v5" fill="none" stroke="#f2f2f2" strokeWidth="2" />
            </svg>
            <svg width="22" height="22" viewBox="0 0 22 22" className="ml-[21px]" aria-hidden="true">
              <path d="M0 7h4l7-7v22l-7-7H0z" fill="#f2f2f2" />
              <path d="M14 7c2 3 2 5 0 8" fill="none" stroke="#ddd" strokeWidth="2" />
              <path d="M17 3c4 6 4 10 0 16" fill="none" stroke="#888" strokeWidth="2" />
            </svg>
            <svg width="22" height="24" viewBox="0 0 22 24" className="ml-[20px]" aria-hidden="true">
              <path d="M4 5L0 14h3l-1 6 4-9H3z" fill="#9a9a9a" />
              <rect x="9.500" y="2.500" width="12" height="21" rx="1" fill="none" stroke="#f2f2f2" strokeWidth="1.400" />
              <path d="M13 0h5v3h-5zM12 5h7v16h-7z" fill="#f2f2f2" />
            </svg>
            <Caret className="ml-[17px]" />
          </button>
        </div>
      </header>

      <div className="flex">
        <Dock />
        <main className="flex min-w-0 flex-1 flex-col bg-[#efefef]">
          <header className="grid h-[55px] grid-cols-[1fr_auto_1fr] items-center border-b-2 border-[#1f1f1f] bg-[#333132] text-white">
            <span />
            <h1 className="ml-5 font-bold">turtlebot3_gmapping.rviz - RViz</h1>
            <div className="-mr-[6px] flex items-center justify-end">
              <button aria-label="Minimise" className="grid size-6 place-items-center">
                <span className="mt-[7px] h-px w-3 bg-white" />
              </button>
              <button aria-label="Restore" className="ml-[26px] grid size-6 place-items-center">
                <svg width="13" height="13" viewBox="0 0 13 13" aria-hidden="true">
                  <path d="M1.500 4.500h7v8h-7z" fill="none" stroke="#fff" strokeWidth="2" />
                  <path d="M4 .5h8.500V9" fill="none" stroke="#aaa" />
                </svg>
              </button>
              <button aria-label="Close" className="ml-[27px] grid size-7 place-items-center rounded-full bg-[#e95420]">
                <svg width="12" height="12" viewBox="0 0 12 12" aria-hidden="true">
                  <path d="M1 1l10 10M11 1L1 11" stroke="#fff" strokeWidth="2" />
                </svg>
              </button>
            </div>
          </header>
          <nav className="flex h-8 items-center gap-[22px] pl-[14px]">
            {["File", "Panels", "Help"].map((name) => (
              <button key={name} className="first-letter:underline first-letter:decoration-2 first-letter:underline-offset-4">
                {name}
              </button>
            ))}
          </nav>
          <Toolbar />
          <div className="flex pt-[2px]">
            <DisplaysPanel />
            <button aria-label="Collapse panel" className="flex w-[33px] shrink-0 items-center justify-end gap-3 pr-[9px]">
              <span className="h-7 border-l-2 border-dotted border-[#c4c4c4]" />
              <svg width="6" height="12" viewBox="0 0 6 12" aria-hidden="true">
                <path d="M6 0v12L0 6z" fill="#555" />
              </svg>
            </button>
            <MapView />
            <span className="w-[5px] shrink-0 border-l-2 border-[#a9b0af] bg-[#efefef]" />
          </div>
          <div className="grid h-[9px] place-items-center pl-[22px]">
            <span className="w-6 border-t-2 border-dotted border-[#bbb]" />
          </div>
          <TimePanel />
        </main>
      </div>

      <footer className="flex h-[30px] items-center justify-end gap-1 pt-1 font-['Open_Sans',sans-serif] text-[17px]">
        {VM_ICONS.map(({ name, art }) => (
          <button key={name} aria-label={name} className="shrink-0">
            <svg width="25" height="25" viewBox="0 0 25 25" aria-hidden="true">
              {art}
            </svg>
          </button>
        ))}
        <span className="-mr-3 shrink-0 whitespace-nowrap">Right Ctrl</span>
      </footer>
    </div>
  );
}
